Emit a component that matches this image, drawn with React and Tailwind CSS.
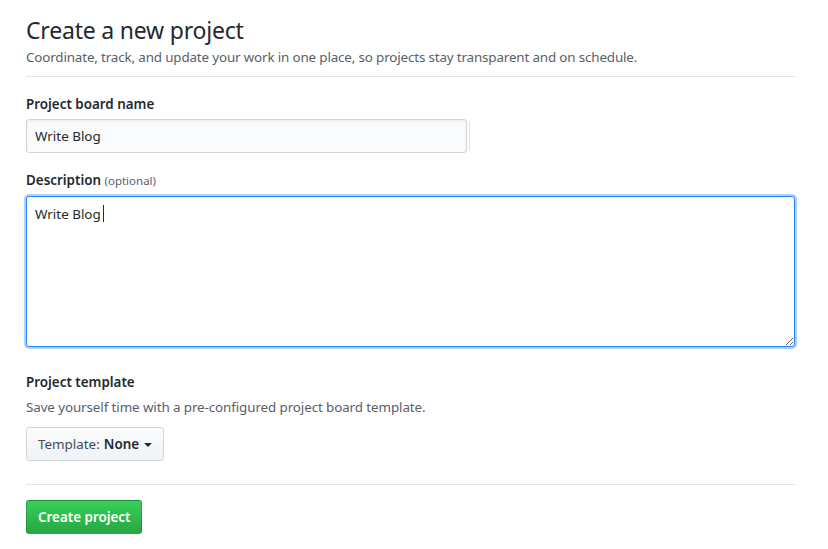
import React, { useState } from 'react';

const FONT = { fontFamily: '"Noto Sans", "Open Sans", "Liberation Sans", sans-serif' };

// GitHub "new project" form
const App = () => {
  const [name, setName] = useState('Write Blog');
  const [desc, setDesc] = useState('Write Blog ');

  return (
    <div className="min-h-[549px] w-[828px] bg-white text-[#24292e]" style={FONT}>
      <div className="ml-[26px] w-[769px] pt-[14px]">
        {/* Header */}
        <div className="border-b border-[#e1e4e8] pb-[9px]">
          <h1 className="text-[23px] leading-[32px] font-normal tracking-[-0.2px]">Create a new project</h1>
          <p className="mt-[1px] text-[13.4px] leading-[20px] text-[#586069] tracking-[-0.15px]">
            Coordinate, track, and update your work in one place, so projects stay transparent and on schedule.
          </p>
        </div>

        {/* Name */}
        <div className="mt-[17px]">
          <label className="block text-[13.4px] leading-[20px] font-semibold">Project board name</label>
          <div className="mt-[5px] flex items-center">
            <input
              value={name}
              onChange={(e) => setName(e.target.value)}
              className="h-[34px] w-[441px] rounded-[3px] border border-[#d1d5da] bg-[#fafbfc] px-[8px] text-[13.4px] text-[#24292e] outline-none shadow-[inset_0_1px_2px_rgba(27,31,35,0.075)]"
              style={FONT}
            />
            <div className="ml-[2px] h-[30px] w-[1px] bg-[#dde6f2]" />
          </div>
        </div>

        {/* Description */}
        <div className="mt-[17px]">
          <label className="block text-[13.4px] leading-[20px] font-semibold">
            Description <span className="text-[11.5px] font-normal text-[#586069]">(optional)</span>
          </label>
          <div className="relative mt-[5px]">
            <textarea
              value={desc}
              onChange={(e) => setDesc(e.target.value)}
              className="block h-[151px] w-[769px] resize-y rounded-[3px] border border-[#2188ff] bg-white px-[8px] py-[7px] text-[13.4px] leading-[20px] text-[#24292e] outline-none shadow-[0_0_0_2px_rgba(3,102,214,0.3)]"
              style={FONT}
            />
            {/* caret */}
            <span className="pointer-events-none absolute left-[77px] top-[9px] h-[17px] w-[1px] bg-[#24292e]" />
          </div>
        </div>

        {/* Template */}
        <div className="mt-[25px]">
          <div className="text-[13.4px] leading-[20px] font-semibold">Project template</div>
          <p className="mt-[5px] text-[13.4px] leading-[20px] text-[#586069] tracking-[-0.1px]">
            Save yourself time with a pre-configured project board template.
          </p>
          <button
            className="mt-[10px] flex h-[34px] items-center rounded-[3px] border border-[#d1d5da] bg-gradient-to-b from-[#fafbfc] to-[#eff3f6] px-[11px] text-[13.4px] text-[#24292e]"
            style={FONT}
          >
            <span className="text-[#444d56]">Template:</span>
            <span className="ml-[4px] font-semibold">None</span>
            <span className="ml-[5px] mt-[1px] h-0 w-0 border-x-[4px] border-t-[4px] border-x-transparent border-t-[#24292e]" />
          </button>
        </div>

        {/* Footer */}
        <div className="mt-[23px] border-t border-[#e1e4e8] pt-[15px]">
          <button
            className="flex h-[34px] items-center rounded-[3px] border border-[rgba(27,31,35,0.2)] bg-gradient-to-b from-[#34d058] to-[#28a745] px-[11px] text-[13.4px] font-semibold text-white"
            style={FONT}
          >
            Create project
          </button>
        </div>
      </div>
    </div>
  );
};

export default App;
